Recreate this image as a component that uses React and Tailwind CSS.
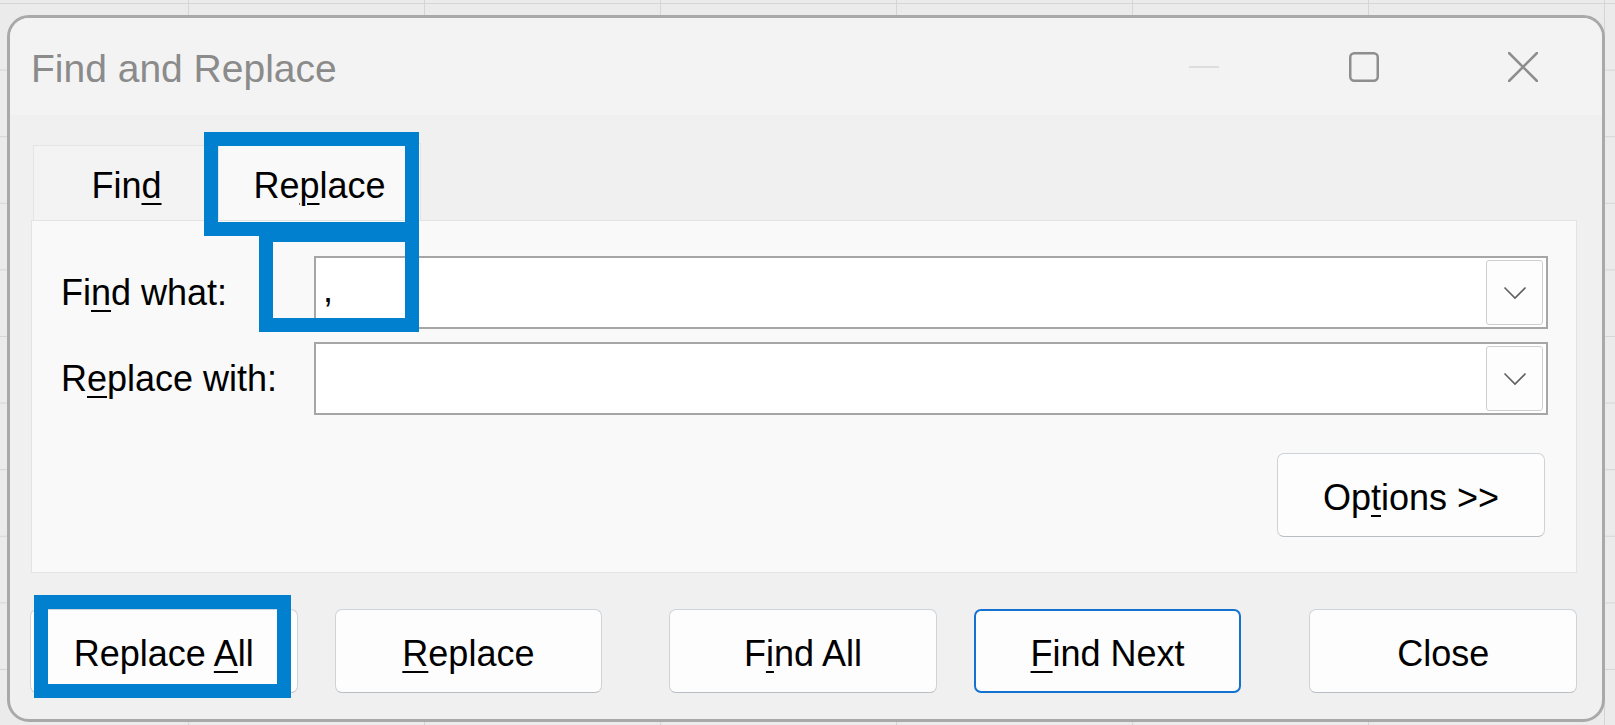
import React from 'react';

const font = "font-['Liberation_Sans',Arial,sans-serif]";

const U = ({ children }) => (
  <span className="underline decoration-[2px] underline-offset-[5px]">{children}</span>
);

const Chevron = () => (
  <svg width="24" height="14" viewBox="0 0 24 14" fill="none">
    <path d="M1.5 1.5 L12 12 L22.5 1.5" stroke="#606060" strokeWidth="1.6" />
  </svg>
);

const Combo = ({ value }) => (
  <div className="flex-1 h-[73px] bg-white border-2 border-[#a6a6a6] flex items-center">
    <div className="flex-1 pl-[7px] pb-[6px] text-[36px] leading-none text-black">{value}</div>
    <div className="w-[57px] h-[65px] mr-[3px] rounded-[3px] border border-[#cfcfcf] bg-[#fdfdfd] flex items-center justify-center">
      <Chevron />
    </div>
  </div>
);

const Button = ({ children, primary, className = '' }) => (
  <div
    className={`w-[268px] h-[84px] rounded-[7px] bg-[#fdfdfd] flex items-center justify-center text-[36px] leading-none text-black ${
      primary ? 'border-2 border-[#1571cf]' : 'border border-[#cdd3d8] border-b-[#b9bec3]'
    } ${className}`}
  >
    <span className="pt-[6px]">{children}</span>
  </div>
);

const Mark = ({ className }) => (
  <div className={`absolute border-[14px] border-[#0080cf] ${className}`}></div>
);

const App = () => {
  return (
    <div
      className={`relative w-[1615px] h-[725px] overflow-hidden bg-[#ebebeb] bg-[linear-gradient(#d5d5d5_1px,transparent_1px),linear-gradient(90deg,#d5d5d5_1px,transparent_1px)] bg-[size:236px_66.6px] bg-[position:188px_3px] ${font}`}
    >
      <div className="ml-[7px] mt-[15px] w-[1598px] h-[707px] rounded-[22px] border-[3px] border-[#a9a9a9] overflow-hidden flex flex-col bg-[#f0f0f0]">
        {/* title bar */}
        <div className="h-[97px] bg-[#f3f3f3] flex items-center pl-[21px] pr-[64px]">
          <div className="text-[39px] leading-none text-[#8b8b8b] pt-[4px]">Find and Replace</div>
          <div className="ml-auto flex items-center">
            <svg width="30" height="30" viewBox="0 0 30 30">
              <line x1="0" y1="15" x2="30" y2="15" stroke="#d6d6d6" strokeWidth="1.5" />
            </svg>
            <svg width="30" height="30" viewBox="0 0 30 30" className="ml-[130px]">
              <rect x="1.25" y="1.25" width="27.5" height="27.5" rx="4" fill="none" stroke="#8e8e8e" strokeWidth="2.5" />
            </svg>
            <svg width="30" height="30" viewBox="0 0 30 30" className="ml-[129px]">
              <path d="M1 1 L29 29 M29 1 L1 29" stroke="#8e8e8e" strokeWidth="2.5" strokeLinecap="round" />
            </svg>
          </div>
        </div>

        {/* body */}
        <div className="flex-1 pl-[21px] pr-[25px] pt-[28px]">
          <div className="flex items-end h-[77px] ml-[2px]">
            <div className="w-[187px] h-[75px] bg-[#f3f3f3] border border-b-0 border-[#e4e4e4] flex items-end justify-center pb-[16px] text-[36px] leading-none text-black">
              <span>Fin<U>d</U></span>
            </div>
            <div className="w-[203px] h-[77px] -ml-[2px] bg-[#f9f9f9] border border-b-0 border-[#e4e4e4] flex items-end justify-center pb-[16px] text-[36px] leading-none text-black">
              <span>Re<U>p</U>lace</span>
            </div>
          </div>

          <div className="h-[353px] bg-[#f9f9f9] border border-[#e3e3e3] pt-[35px] pr-[28px] flex flex-col">
            <div className="flex items-center">
              <div className="w-[282px] pl-[29px] text-[36px] leading-none text-black">
                Fi<U>n</U>d what:
              </div>
              <Combo value="," />
            </div>
            <div className="flex items-center mt-[13px]">
              <div className="w-[282px] pl-[29px] text-[36px] leading-none text-black">
                R<U>e</U>place with:
              </div>
              <Combo value="" />
            </div>
            <div className="flex justify-end mt-[38px] mr-[3px]">
              <Button className="w-[267px] h-[83px]">
                Op<U>t</U>ions &gt;&gt;
              </Button>
            </div>
          </div>

          <div className="flex mt-[36px] -ml-[1px]">
            <Button>Replace <U>A</U>ll</Button>
            <Button className="ml-[37px]"><U>R</U>eplace</Button>
            <Button className="ml-[67px]">F<U>i</U>nd All</Button>
            <Button primary className="ml-[37px]"><U>F</U>ind Next</Button>
            <Button className="ml-[68px]">Close</Button>
          </div>
        </div>
      </div>

      {/* highlight boxes */}
      <Mark className="left-[204px] top-[132px] w-[215px] h-[104px]" />
      <Mark className="left-[259px] top-[228px] w-[160px] h-[104px]" />
      <Mark className="left-[34px] top-[595px] w-[257px] h-[103px]" />
    </div>
  );
};

export default App;
